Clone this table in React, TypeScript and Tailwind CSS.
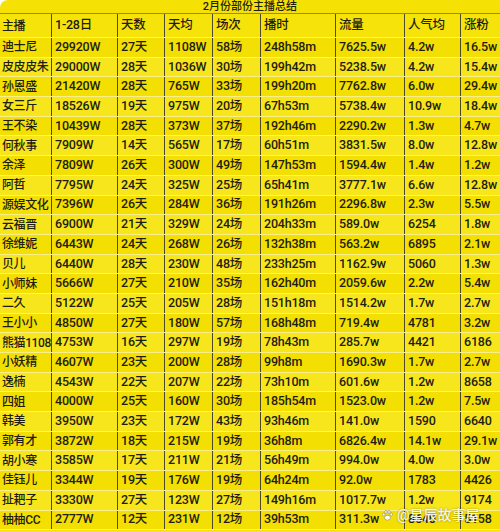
const headers = ["主播", "1-28日", "天数", "天均", "场次", "播时", "流量", "人气均", "涨粉"]

const rows: string[][] = [
  ["迪士尼", "29920W", "27天", "1108W", "58场", "248h58m", "7625.5w", "4.2w", "16.5w"],
  ["皮皮皮朱", "29000W", "28天", "1036W", "30场", "199h42m", "5238.5w", "4.2w", "15.4w"],
  ["孙恩盛", "21420W", "28天", "765W", "33场", "199h20m", "7762.8w", "6.0w", "29.4w"],
  ["女三斤", "18526W", "19天", "975W", "20场", "67h53m", "5738.4w", "10.9w", "18.4w"],
  ["王不染", "10439W", "28天", "373W", "37场", "192h46m", "2290.2w", "1.3w", "4.7w"],
  ["何秋事", "7909W", "14天", "565W", "17场", "60h51m", "3831.5w", "8.0w", "12.8w"],
  ["余泽", "7809W", "26天", "300W", "49场", "147h53m", "1594.4w", "1.4w", "1.2w"],
  ["阿哲", "7795W", "24天", "325W", "25场", "65h41m", "3777.1w", "6.6w", "12.8w"],
  ["源娱文化", "7396W", "26天", "284W", "36场", "191h26m", "2296.8w", "2.3w", "5.5w"],
  ["云福晋", "6900W", "21天", "329W", "24场", "204h33m", "589.0w", "6254", "1.8w"],
  ["徐维妮", "6443W", "24天", "268W", "26场", "132h38m", "563.2w", "6895", "2.1w"],
  ["贝儿", "6440W", "28天", "230W", "48场", "233h25m", "1162.9w", "5060", "1.3w"],
  ["小师妹", "5666W", "27天", "210W", "35场", "162h40m", "2059.6w", "2.2w", "5.4w"],
  ["二久", "5122W", "25天", "205W", "28场", "151h18m", "1514.2w", "1.7w", "2.7w"],
  ["王小小", "4850W", "27天", "180W", "57场", "168h48m", "719.4w", "4781", "3.2w"],
  ["熊猫1108", "4753W", "16天", "297W", "19场", "78h43m", "285.7w", "4421", "6186"],
  ["小妖精", "4607W", "23天", "200W", "28场", "99h8m", "1690.3w", "1.7w", "2.7w"],
  ["逸楠", "4543W", "22天", "207W", "22场", "73h10m", "601.6w", "1.2w", "8658"],
  ["四姐", "4000W", "25天", "160W", "30场", "185h54m", "1523.0w", "1.2w", "7.5w"],
  ["韩美", "3950W", "23天", "172W", "43场", "93h46m", "141.0w", "1590", "6640"],
  ["郭有才", "3872W", "18天", "215W", "19场", "36h8m", "6826.4w", "14.1w", "29.1w"],
  ["胡小寒", "3585W", "17天", "211W", "21场", "56h49m", "994.0w", "4.0w", "3.0w"],
  ["佳钰儿", "3344W", "19天", "176W", "19场", "64h24m", "92.0w", "1783", "4426"],
  ["扯耙子", "3330W", "27天", "123W", "27场", "149h16m", "1017.7w", "1.2w", "9174"],
  ["柚柚CC", "2777W", "12天", "231W", "12场", "39h53m", "311.3w", "8640", "5158"],
]

const grid = "grid grid-cols-[51px_66px_47px_48px_48px_75px_69px_56px_40px]"

function Cell({ text, first }: { text: string; first?: boolean }) {
  return (
    <div
      className={`flex items-center whitespace-nowrap ${
        first
          ? "pl-[2px] text-[12px] tracking-[-0.4px]"
          : "overflow-hidden border-l border-[#4d4a2e] pl-[3px] text-[12.5px] tracking-[-0.2px]"
      }`}
    >
      {text}
    </div>
  )
}

function PawIcon() {
  return (
    <svg width="13" height="13" viewBox="0 0 24 24" fill="#ffffff" stroke="#8a8a8a" strokeWidth="1.2">
      <ellipse cx="12" cy="16" rx="5.5" ry="4.5" />
      <ellipse cx="5" cy="10" rx="2.2" ry="2.8" />
      <ellipse cx="9.2" cy="5.5" rx="2.2" ry="2.8" />
      <ellipse cx="14.8" cy="5.5" rx="2.2" ry="2.8" />
      <ellipse cx="19" cy="10" rx="2.2" ry="2.8" />
    </svg>
  )
}

export default function App() {
  return (
    <div
      className="relative h-[531px] w-[500px] overflow-hidden rounded-tl-[8px] bg-[#f5e104] font-medium text-[#1f1d12]"
      style={{ fontFamily: "Roboto, 'Noto Sans CJK SC', sans-serif" }}
    >
      {/* Title */}
      <div className="flex h-[14px] items-center justify-center border-b border-[#8c8650] text-[11px] leading-none">
        2月份部份主播总结
      </div>

      {/* Header */}
      <div className={`${grid} h-[24px] border-b border-[#fbef8a] bg-[#f6e30a]`}>
        {headers.map((h, i) => (
          <Cell key={h} text={h} first={i === 0} />
        ))}
      </div>

      {/* Rows */}
      {rows.map((r, idx) => (
        <div
          key={r[0]}
          className={`${grid} h-[19.7px] border-b border-[#fbef8a] ${idx % 2 === 0 ? "bg-[#f4df02]" : "bg-[#f7e61c]"}`}
        >
          {r.map((t, i) => (
            <Cell key={i} text={t} first={i === 0} />
          ))}
        </div>
      ))}

      {/* Watermark */}
      <div className="absolute left-[381px] top-[505px] flex items-center gap-[3px] text-[14px] text-white/90 [text-shadow:0_0_2px_rgba(0,0,0,0.45)]">
        <PawIcon />
        <span>@星辰故事屋</span>
      </div>
    </div>
  )
}
